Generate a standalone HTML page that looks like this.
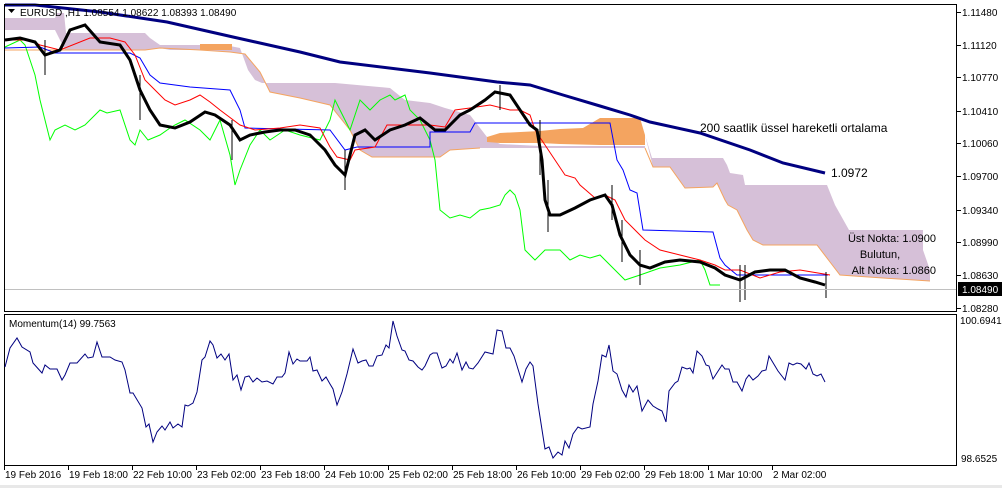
<!DOCTYPE html>
<html><head><meta charset="utf-8"><style>
html,body{margin:0;padding:0;background:#fff;}
body{width:1002px;height:488px;overflow:hidden;position:relative;font-family:"Liberation Sans",sans-serif;}
svg{position:absolute;left:0;top:0;}
</style></head><body>
<svg width="1002" height="488" viewBox="0 0 1002 488" xmlns="http://www.w3.org/2000/svg" font-family="Liberation Sans, sans-serif">
<rect x="0" y="0" width="1002" height="488" fill="#fff"/>
<rect x="0" y="485" width="1002" height="3" fill="#e8e8e8"/>
<polygon fill="#d6c0d8" points="5,18 55,18 57,13 64,13 66,33 145,33 150,38 160,45 200,45 230,46 240,48 248,70 255,80 262,83 335,83 390,88 405,100 430,103 445,108 470,115 487,137 500,144 540,146 645,146 645,148 480,148 450,150 440,157 372,157 360,150 350,130 330,105 300,98 270,92 260,72 245,54 230,52 200,50 170,50 160,48 145,50 65,50 60,40 55,30 5,30"/>
<polygon fill="#f4a460" points="200,44 232,44 232,50 200,50"/>
<polygon fill="#f4a460" points="487,137 500,133 540,131 560,129 583,128 600,118 640,118 645,135 645,145 600,145 560,144 540,143 500,143 487,142"/>
<polygon fill="#d6c0d8" points="645,135 652,158 723,158 727,165 730,173 743,175 745,185 827,185 835,205 849,230 923,230 923,250 930,270 930,281 883,278 840,275 830,262 817,245 763,245 753,240 747,230 737,210 728,205 725,200 717,183 713,187 685,188 670,167 653,167"/>
<polyline fill="none" stroke="#f4a460" stroke-width="1" points="645,148 653,167 670,167 685,188 713,187 717,183 725,200 728,205 737,210 747,230 753,240 763,245 817,245 830,262 840,275 883,278 930,281"/>
<polyline fill="none" stroke="#f4a460" stroke-width="1" points="5,50 65,50 145,50 160,48 200,50 230,52 245,54 260,72 270,92 300,98 330,105 350,130 360,150 372,157 440,157 450,150 480,148"/>
<polyline fill="none" stroke="#000080" stroke-width="3" points="5,5 35,5 100,12 167,22 233,37 300,52 340,62 430,73 497,82 530,85 563,95 600,106 630,115 650,122 700,133 750,150 783,163 825,173"/>
<polyline fill="none" stroke="#00ff00" stroke-width="1" points="5,47 20,40 25,45 35,75 40,100 50,140 55,130 65,125 75,130 85,125 100,110 107,113 120,110 130,140 135,145 140,130 148,140 160,135 170,128 175,125 185,120 200,130 210,140 220,120 230,155 235,185 240,170 250,145 260,130 270,140 285,130 300,135 320,140 330,120 335,100 340,110 350,130 355,115 360,100 370,110 380,100 390,95 395,100 405,95 410,110 420,120 430,140 435,160 440,210 450,218 460,215 470,218 480,210 490,208 500,205 505,195 510,190 515,195 520,210 525,250 535,260 545,250 560,250 570,260 580,255 590,258 600,255 610,265 620,275 625,280 640,275 660,268 680,265 700,260 705,270 710,285 720,285"/>
<polyline fill="none" stroke="#0000ff" stroke-width="1" points="5,48 40,47 55,53 130,53 140,58 150,75 160,83 190,87 230,90 240,110 245,128 330,130 345,150 357,147 430,147 430,132 470,132 475,123 610,123 617,160 623,170 630,190 637,193 643,230 713,232 720,258 725,265 737,275 828,275"/>
<polyline fill="none" stroke="#ff0000" stroke-width="1" points="5,40 30,40 40,45 60,50 90,38 110,38 125,42 135,55 145,80 155,90 165,100 175,105 190,100 200,95 210,102 220,110 240,125 255,130 280,128 300,125 320,128 330,147 337,157 350,160 355,150 375,147 387,125 410,125 430,125 445,127 455,110 470,108 490,105 510,110 520,110 530,115 535,130 545,145 555,160 565,175 575,178 580,185 595,198 605,195 615,200 625,220 635,230 645,240 660,250 680,255 700,260 715,265 725,270 740,270 760,278 780,272 800,270 830,275"/>
<polyline fill="none" stroke="#000" stroke-width="3" points="5,40 20,38 35,42 45,55 60,50 70,30 85,25 100,42 120,45 130,60 140,90 150,110 160,125 175,128 190,122 205,112 215,115 230,125 240,140 250,135 265,132 280,130 295,130 310,135 325,150 335,165 345,175 355,135 365,130 375,140 390,130 405,125 420,118 435,130 445,130 460,115 470,110 485,100 495,92 510,95 520,110 530,125 537,130 542,160 545,200 550,215 560,215 575,208 590,200 605,195 612,205 620,235 630,255 640,265 650,268 665,262 680,260 700,262 715,268 725,275 740,280 755,272 770,270 785,270 800,278 815,282 825,285"/>
<g stroke="#000" stroke-width="1">
<line x1="45" y1="40" x2="45" y2="75"/><line x1="140" y1="75" x2="140" y2="120"/><line x1="232" y1="120" x2="232" y2="160"/><line x1="345" y1="150" x2="345" y2="190"/><line x1="540" y1="120" x2="540" y2="175"/><line x1="548" y1="180" x2="548" y2="232"/><line x1="612" y1="185" x2="612" y2="220"/><line x1="622" y1="220" x2="622" y2="262"/><line x1="640" y1="250" x2="640" y2="285"/><line x1="740" y1="265" x2="740" y2="302"/><line x1="745" y1="265" x2="745" y2="300"/><line x1="826" y1="272" x2="826" y2="298"/><line x1="500" y1="85" x2="500" y2="110"/>
</g>
<line x1="4" y1="289.5" x2="957" y2="289.5" stroke="#c0c0c0"/>
<rect x="4.5" y="4.5" width="952" height="307" fill="none" stroke="#000"/>
<rect x="4.5" y="314.5" width="952" height="151" fill="none" stroke="#000"/>
<polyline fill="none" stroke="#000080" stroke-width="1" points="5,367 10,348 17,338 22,347 30,352 33,363 42,373 45,365 50,369 57,369 62,380 65,375 70,363 77,363 85,354 88,358 93,357 97,342 102,357 110,357 115,360 122,362 125,370 130,393 133,393 142,408 146,427 149,424 153,442 157,432 162,426 165,430 170,422 173,428 178,424 182,427 185,405 188,406 193,403 197,392 202,360 205,357 210,341 213,345 217,358 221,354 225,360 229,354 233,380 237,375 241,390 245,377 249,376 253,382 257,378 262,382 267,381 273,384 277,377 282,377 285,373 289,352 293,364 297,359 300,361 303,361 307,361 310,357 313,371 317,370 322,381 326,377 330,384 333,389 337,405 342,392 347,374 353,349 358,363 362,361 366,360 369,366 373,366 377,356 382,355 386,345 389,348 393,321 397,336 402,350 405,351 409,360 413,361 418,367 422,370 425,366 430,355 433,353 437,353 442,368 446,366 450,359 453,363 457,353 462,370 466,362 469,368 473,369 478,363 485,352 493,354 497,330 502,331 506,348 510,348 514,356 522,382 526,369 530,362 533,366 538,404 545,449 549,447 553,458 558,452 562,455 565,441 569,448 573,434 578,427 582,429 590,427 593,404 598,381 602,355 606,357 609,345 613,371 617,374 622,390 626,397 629,385 633,392 637,386 642,411 648,400 653,406 658,409 662,411 666,422 669,391 675,383 678,381 682,367 687,369 690,368 693,373 697,351 702,356 706,365 709,366 713,379 722,365 725,369 729,369 733,382 737,382 742,391 746,379 749,375 753,380 758,376 762,371 766,370 769,356 778,371 785,380 789,363 793,365 797,363 801,364 806,369 809,363 813,374 817,376 821,374 825,382"/>
<g stroke="#000">
<line x1="957" y1="12.5" x2="961" y2="12.5"/><line x1="957" y1="45.5" x2="961" y2="45.5"/><line x1="957" y1="77.5" x2="961" y2="77.5"/><line x1="957" y1="111.5" x2="961" y2="111.5"/><line x1="957" y1="143.5" x2="961" y2="143.5"/><line x1="957" y1="176.5" x2="961" y2="176.5"/><line x1="957" y1="210.5" x2="961" y2="210.5"/><line x1="957" y1="242.5" x2="961" y2="242.5"/><line x1="957" y1="275.5" x2="961" y2="275.5"/><line x1="957" y1="308.5" x2="961" y2="308.5"/>
<line x1="4.5" y1="465" x2="4.5" y2="470"/><line x1="68.5" y1="465" x2="68.5" y2="470"/><line x1="132.5" y1="465" x2="132.5" y2="470"/><line x1="196.5" y1="465" x2="196.5" y2="470"/><line x1="260.5" y1="465" x2="260.5" y2="470"/><line x1="324.5" y1="465" x2="324.5" y2="470"/><line x1="388.5" y1="465" x2="388.5" y2="470"/><line x1="452.5" y1="465" x2="452.5" y2="470"/><line x1="516.5" y1="465" x2="516.5" y2="470"/><line x1="580.5" y1="465" x2="580.5" y2="470"/><line x1="644.5" y1="465" x2="644.5" y2="470"/><line x1="708.5" y1="465" x2="708.5" y2="470"/><line x1="772.5" y1="465" x2="772.5" y2="470"/>
</g>
<g font-size="10" fill="#000">
<text x="962" y="16">1.11480</text><text x="962" y="49">1.11120</text><text x="962" y="81">1.10770</text><text x="962" y="115">1.10410</text><text x="962" y="147">1.10060</text><text x="962" y="180">1.09700</text><text x="962" y="214">1.09340</text><text x="962" y="246">1.08990</text><text x="962" y="279">1.08630</text><text x="962" y="312">1.08280</text>
<text x="960" y="324">100.6941</text><text x="961" y="462">98.6525</text>
</g>
<rect x="958" y="282" width="44" height="14" fill="#000"/>
<text x="962" y="293" font-size="10" fill="#fff">1.08490</text>
<g font-size="10" fill="#000">
<text x="5" y="478">19 Feb 2016</text><text x="69" y="478">19 Feb 18:00</text><text x="133" y="478">22 Feb 10:00</text><text x="197" y="478">23 Feb 02:00</text><text x="261" y="478">23 Feb 18:00</text><text x="325" y="478">24 Feb 10:00</text><text x="389" y="478">25 Feb 02:00</text><text x="453" y="478">25 Feb 18:00</text><text x="517" y="478">26 Feb 10:00</text><text x="581" y="478">29 Feb 02:00</text><text x="645" y="478">29 Feb 18:00</text><text x="709" y="478">1 Mar 10:00</text><text x="773" y="478">2 Mar 02:00</text>
</g>
<text x="9" y="327" font-size="10" fill="#000">Momentum(14) 99.7563</text>
<polygon points="8,9 15,9 11.5,13" fill="#000"/>
<text x="20" y="16" font-size="10" fill="#000">EURUSD ,H1  1.08554 1.08622 1.08393 1.08490</text>
<text x="700" y="132" font-size="12" fill="#000">200 saatlik üssel hareketli ortalama</text>
<text x="831" y="177" font-size="12" fill="#000">1.0972</text>
<text x="936" y="242" font-size="11" fill="#000" text-anchor="end">Üst Nokta: 1.0900</text>
<text x="880" y="258" font-size="11" fill="#000" text-anchor="middle">Bulutun,</text>
<text x="936" y="274" font-size="11" fill="#000" text-anchor="end">Alt Nokta: 1.0860</text>
</svg>
</body></html>
